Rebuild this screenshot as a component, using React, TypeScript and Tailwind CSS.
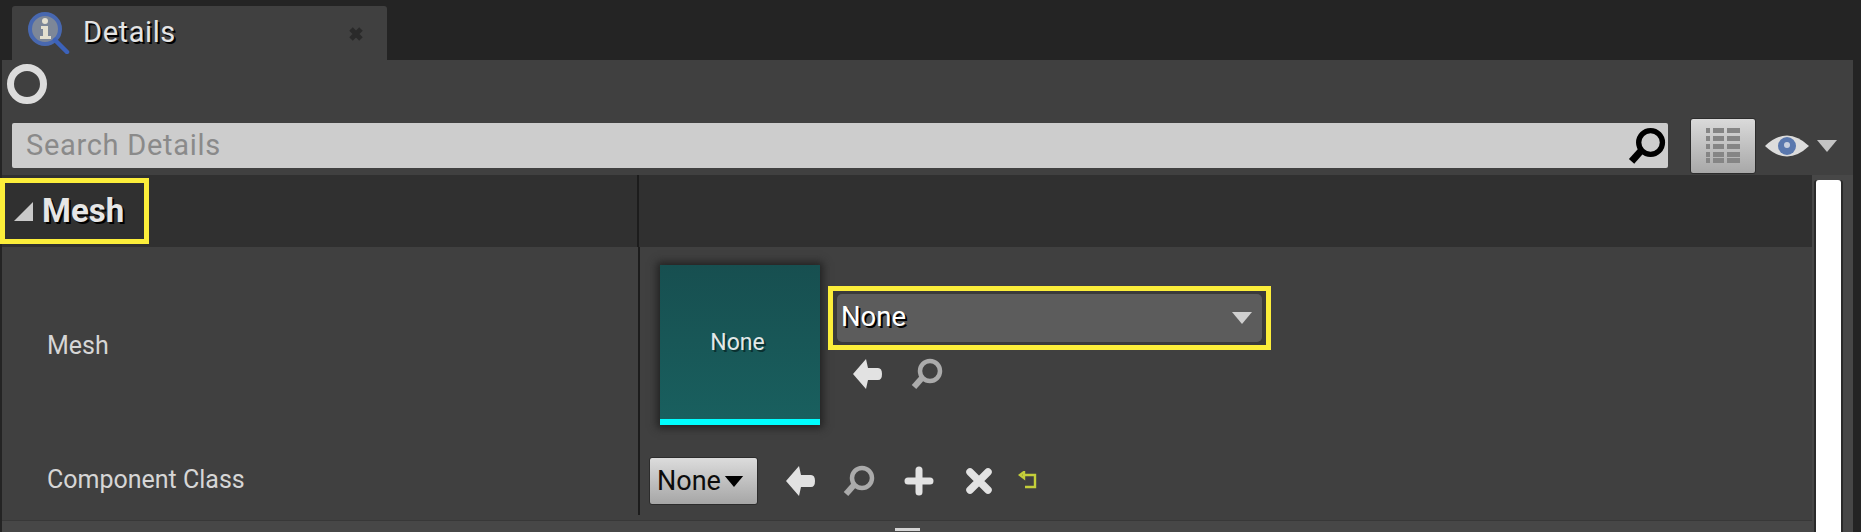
import React from 'react';

const font = "font-['Roboto','Liberation_Sans',sans-serif]";

const BackArrow = ({ className = '' }: { className?: string }) => (
  <svg viewBox="0 0 32 32" className={className}>
    <path d="M15 1 L2 16 L15 31 L17 22 L27 22 Q31 22 31 16 Q31 10 27 10 L17 10 Z" fill="#e2e2e2" />
  </svg>
);

const Magnifier = ({ className = '', color = '#ababab' }: { className?: string; color?: string }) => (
  <svg viewBox="0 0 32 32" className={className}>
    <circle cx="19" cy="13" r="10" fill="none" stroke={color} strokeWidth="4.5" />
    <path d="M11 20 L3 29" stroke={color} strokeWidth="6" />
  </svg>
);

const Tri = ({ className = '', color = '#d0d0d0' }: { className?: string; color?: string }) => (
  <svg viewBox="0 0 20 12" className={className}>
    <path d="M0 0 H20 L10 12 Z" fill={color} />
  </svg>
);

export default function App() {
  return (
    <div className={`${font} w-full h-[532px] bg-[#242424] flex flex-col overflow-hidden`}>
      {/* tab strip */}
      <div className="h-[60px] shrink-0 pt-[6px] pl-[12px] flex">
        <div className="w-[375px] bg-[#404040] rounded-t-[3px] flex items-center relative">
          <svg viewBox="0 0 44 44" className="w-[44px] h-[44px] ml-[14px] -mt-[3px]">
            <circle cx="19" cy="19" r="15" fill="#7d8798" stroke="#4868b0" strokeWidth="4" />
            <path d="M29 30 L41 42" stroke="#3c62ba" strokeWidth="4.5" strokeLinecap="round" />
            <circle cx="19" cy="11" r="3" fill="#e4e0d0" />
            <path d="M15 16 H22 V26 H25 V29 H14 V26 H17 V19 H15 Z" fill="#e4e0d0" />
          </svg>
          <span className="ml-[13px] -mt-[2px] text-[29px] leading-none tracking-[0.6px] text-[#e4e4e4] [text-shadow:2px_2px_0_#000]">Details</span>
          <svg viewBox="0 0 16 16" className="absolute right-[23px] top-[20px] w-[16px] h-[16px]">
            <path d="M3 3 L13 13 M13 3 L3 13" stroke="#2a2a2a" strokeWidth="5" />
          </svg>
        </div>
      </div>

      {/* panel */}
      <div className="flex-1 ml-[2px] mr-[8px] bg-[#404040] flex flex-col min-h-0">
        <div className="h-[57px] shrink-0 flex items-center pl-[5px] pb-[9px]">
          <div className="w-[40px] h-[40px] rounded-full border-[7px] border-[#dcdcdc]" />
        </div>

        <div className="h-[58px] shrink-0 flex items-center pl-[10px]">
          <div className="w-[1656px] h-[45px] -mt-[1px] bg-[#cdcdcd] rounded-[2px] flex items-center justify-between pl-[14px] pr-[2px]">
            <span className="text-[29px] leading-none text-[#8a8a8a] tracking-[0.7px]">Search Details</span>
            <Magnifier color="#000" className="w-[38px] h-[38px]" />
          </div>
          <div className="ml-[22px] w-[66px] h-[56px] rounded-[3px] border border-[#2c2c2c] bg-gradient-to-b from-[#dadada] to-[#a8a8a8] flex items-center justify-center">
            <svg viewBox="0 0 34 36" className="w-[34px] h-[36px]">
              {[0, 8, 16, 24, 30].map((y) => (
                <g key={y} fill="#858585">
                  <rect x="0" y={y} width="4" height="5" />
                  <rect x="7" y={y} width="11" height="5" />
                  <rect x="21" y={y} width="13" height="5" />
                </g>
              ))}
            </svg>
          </div>
          <svg viewBox="0 0 44 26" className="ml-[9px] w-[44px] h-[26px]">
            <path d="M0 13 Q22 -8 44 13 Q22 34 0 13 Z" fill="#dcdcdc" />
            <circle cx="22" cy="13" r="9" fill="#5a78ae" />
            <circle cx="22" cy="12" r="3" fill="#c8d0e0" />
          </svg>
          <Tri className="ml-[8px] w-[20px] h-[12px]" color="#c4c4c4" />
        </div>

        {/* details area */}
        <div className="flex-1 flex min-h-0">
          <div className="flex-1 flex flex-col min-w-0">
            {/* category header */}
            <div className="h-[72px] shrink-0 bg-[#303030] flex">
              <div className="w-[637px] shrink-0 flex items-center -ml-[2px]">
                <div className="w-[149px] h-[66px] border-[5px] border-[#fcee3a] flex items-center pl-[9px]">
                  <span className="w-0 h-0 border-b-[19px] border-b-[#c9c9c9] border-l-[19px] border-l-transparent" />
                  <span className="ml-[9px] -mt-[2px] text-[33px] leading-none font-bold text-[#e6e6e6] [text-shadow:2px_2px_0_#000]">Mesh</span>
                </div>
              </div>
              <div className="w-[2px] bg-[#1c1c1c]" />
            </div>

            {/* rows */}
            <div className="flex-1 flex flex-col min-h-0">
              <div className="h-[200px] shrink-0 flex">
                <div className="w-[636px] shrink-0 flex items-center pl-[45px]">
                  <span className="text-[25px] leading-none text-[#d6d6d6] -mt-[3px]">Mesh</span>
                </div>
                <div className="w-[2px] bg-[#1c1c1c]" />
                <div className="pl-[20px] pt-[18px] flex items-start">
                  <div className="w-[160px] h-[160px] bg-gradient-to-b from-[#174f50] to-[#19605f] shadow-[0_0_8px_3px_#222] flex flex-col">
                    <div className="flex-1 flex items-center justify-center pr-[5px]">
                      <span className="text-[23px] leading-none text-[#e2e8e8] [text-shadow:2px_2px_0_#0a3030]">None</span>
                    </div>
                    <div className="h-[6px] bg-[#00ffff]" />
                  </div>
                  <div className="ml-[8px] mt-[21px] flex flex-col">
                    <div className="w-[443px] h-[64px] border-[5px] border-[#fcee3a] flex items-center px-[4px] bg-[#3a3a3a]">
                      <div className="flex-1 h-[48px] rounded-[5px] bg-[#5c5c5c] flex items-center justify-between pl-[4px] pr-[10px]">
                        <span className="-mt-[2px] text-[27.5px] leading-none text-white [text-shadow:2px_2px_0_#000]">None</span>
                        <Tri className="w-[20px] h-[12px]" />
                      </div>
                    </div>
                    <div className="flex items-center mt-[8px] pl-[23px]">
                      <BackArrow className="w-[32px] h-[32px]" />
                      <Magnifier className="ml-[28px] w-[32px] h-[32px]" />
                    </div>
                  </div>
                </div>
              </div>

              <div className="h-[68px] shrink-0 flex">
                <div className="w-[636px] shrink-0 flex items-center pl-[45px]">
                  <span className="-mt-[4px] text-[25px] leading-none text-[#d6d6d6]">Component Class</span>
                </div>
                <div className="w-[2px] bg-[#1c1c1c]" />
                <div className="pl-[9px] flex items-center">
                  <div className="w-[109px] h-[48px] rounded-[3px] border border-[#2c2c2c] bg-gradient-to-b from-[#dcdcdc] to-[#a6a6a6] flex items-center pl-[7px]">
                    <span className="text-[27px] leading-none text-[#0c0c0c]">None</span>
                    <Tri className="ml-[2px] w-[22px] h-[11px]" color="#000" />
                  </div>
                  <BackArrow className="ml-[26px] w-[32px] h-[32px]" />
                  <Magnifier className="ml-[27px] w-[32px] h-[32px]" />
                  <svg viewBox="0 0 30 30" className="ml-[29px] w-[30px] h-[30px]">
                    <path d="M15 4 V26 M4 15 H26" stroke="#e2e2e2" strokeWidth="7" strokeLinecap="round" />
                  </svg>
                  <svg viewBox="0 0 30 30" className="ml-[30px] w-[30px] h-[30px]">
                    <path d="M6 6 L24 24 M24 6 L6 24" stroke="#e2e2e2" strokeWidth="7.5" strokeLinecap="round" />
                  </svg>
                  <svg viewBox="0 0 20 20" className="ml-[24px] w-[20px] h-[20px]">
                    <path d="M2 4 L6 1 V7 Z M5 4 H17 V16 H7" fill="none" stroke="#c4cf3a" strokeWidth="2.4" />
                  </svg>
                </div>
              </div>

              {/* bottom band */}
              <div className="flex-1 mt-[5px] bg-[#474747] border-t border-[#383838] flex justify-center min-h-0">
                <div className="w-[25px] h-[3px] bg-[#d4d4d4] mt-[7px]" />
              </div>
            </div>
          </div>

          {/* scrollbar */}
          <div className="w-[41px] shrink-0 bg-[#474747] pt-[5px] pl-[2px]">
            <div className="w-[29px] h-full border-x-2 border-[#2a2a2a] rounded-t-[3px]">
              <div className="w-full h-full bg-white rounded-t-[3px]" />
            </div>
          </div>
        </div>
      </div>
    </div>
  );
}
